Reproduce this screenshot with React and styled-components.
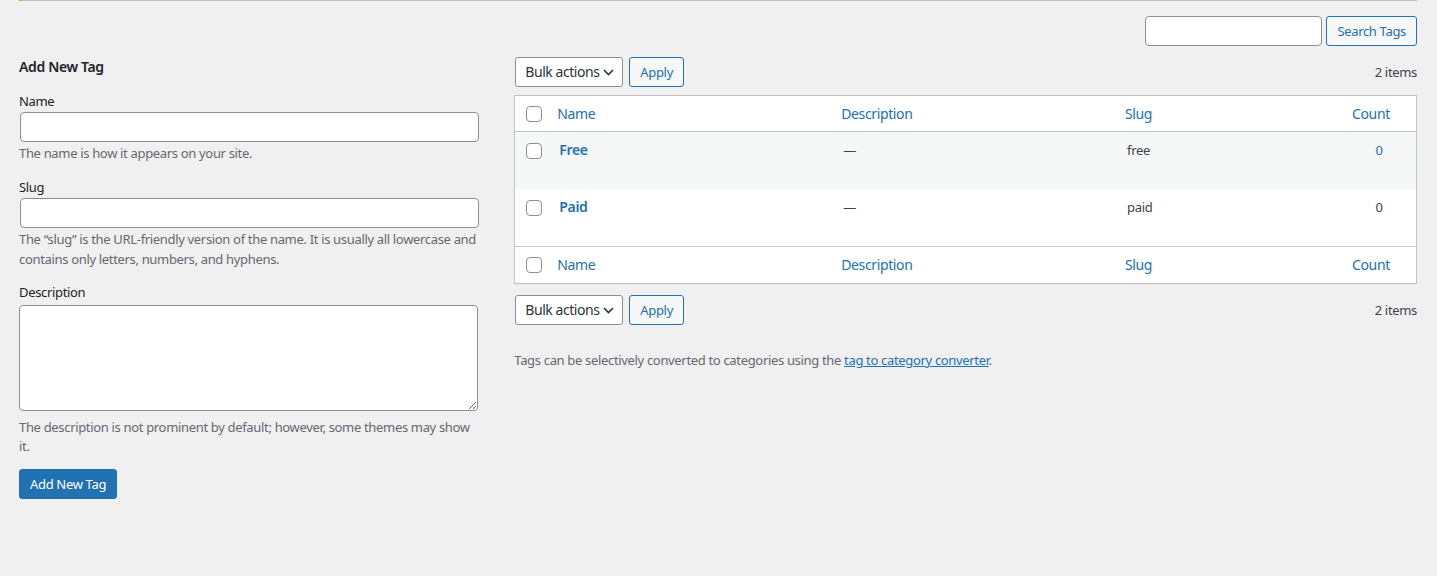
import React from 'react'
import styled, { createGlobalStyle } from 'styled-components'

const FONT = `'Noto Sans', 'Open Sans', sans-serif`
const TIGHT = '-0.33px'
const TIGHT_LG = '-0.36px'

const GlobalStyle = createGlobalStyle`
  * { box-sizing: border-box; }
  html, body {
    margin: 0;
    background: #f0f0f1;
  }
  body {
    font-family: ${FONT};
    font-size: 13px;
    line-height: 1.4em;
    letter-spacing: ${TIGHT};
    color: #3c434a;
  }
`

const Page = styled.div`
  min-height: 576px;
  padding: 0 20px 0 19px;
`

const NoticeEdge = styled.div`
  height: 1px;
  background: #c3c4c7;
  border-left: 3px solid #dba617;
`

const SearchBox = styled.div`
  display: flex;
  justify-content: flex-end;
  gap: 4px;
  margin-top: 15px;
`

const TextInput = styled.input`
  display: block;
  width: ${({ $width }) => $width || '95%'};
  height: 30px;
  margin: ${({ $margin }) => $margin || '1px 1px 0'};
  padding: 0 8px;
  border: 1px solid #8c8f94;
  border-radius: 4px;
  background: #fff;
  font-family: ${FONT};
  font-size: 14px;
  color: #2c3338;
  outline: none;
`

const TextArea = styled.textarea`
  display: block;
  width: 95%;
  height: 106px;
  margin: 2px 0 0;
  padding: 2px 6px;
  border: 1px solid #8c8f94;
  border-radius: 4px;
  background: #fff;
  font-family: ${FONT};
  font-size: 14px;
  outline: none;
`

const Button = styled.button`
  height: 30px;
  padding: 0 10px;
  margin: 0;
  border: 1px solid #2271b1;
  border-radius: 3px;
  background: ${({ $primary }) => ($primary ? '#2271b1' : '#f6f7f7')};
  color: ${({ $primary }) => ($primary ? '#fff' : '#2271b1')};
  font-family: ${FONT};
  font-size: 13px;
  letter-spacing: ${TIGHT};
  line-height: 28px;
  white-space: nowrap;
  cursor: pointer;
`

const Columns = styled.div`
  display: flex;
  align-items: flex-start;
`

const ColLeft = styled.div`
  width: 35%;
  flex: none;
  padding-right: 6px;
`

const ColRight = styled.div`
  flex: 1;
  min-width: 0;
  padding-left: 6px;
`

const FormTitle = styled.h2`
  margin: 11px 0 15px;
  font-size: 14px;
  font-weight: 600;
  line-height: 1.4;
  letter-spacing: ${TIGHT_LG};
  color: #1d2327;
`

const Field = styled.div`
  padding-bottom: ${({ $last }) => ($last ? '7px' : '9px')};
`

const Label = styled.label`
  display: block;
  line-height: 1.5;
  color: #1d2327;
`

const Help = styled.p`
  width: 95%;
  margin: ${({ $top }) => $top || '2px'} 0 5px;
  line-height: 1.5;
  color: #646970;
`

const Submit = styled.p`
  margin: 0;
`

const TableNav = styled.div`
  display: flex;
  align-items: center;
  justify-content: space-between;
  height: 30px;
  margin: ${({ $bottom }) => ($bottom ? '11px 0 0' : '11px 0 8px')};
`

const Actions = styled.div`
  display: flex;
  gap: 6px;
`

const SelectBox = styled.div`
  display: flex;
  align-items: center;
  justify-content: space-between;
  width: 108px;
  height: 30px;
  margin-left: 1px;
  padding: 0 8px 0 9px;
  border: 1px solid #8c8f94;
  border-radius: 3px;
  background: #fff;
  color: #2c3338;
  font-size: 14px;
  letter-spacing: -0.45px;
  line-height: 2;
  white-space: nowrap;
`

const ItemCount = styled.span`
  font-size: 13px;
  color: #3c434a;
`

const Table = styled.table`
  width: 100%;
  table-layout: fixed;
  border-spacing: 0;
  border: 1px solid #c3c4c7;
  background: #fff;
  box-shadow: 0 1px 1px rgba(0, 0, 0, 0.04);
`

const Col = styled.col`
  width: ${({ $w }) => $w || 'auto'};
`

const HeadCell = styled.th`
  padding: ${({ $foot }) => ($foot ? '8px 10px 9px' : '8px 10px')};
  ${({ $foot }) => ($foot ? 'border-top' : 'border-bottom')}: 1px solid #c3c4c7;
  text-align: ${({ $center }) => ($center ? 'center' : 'left')};
  ${({ $center }) => $center && 'padding-right: 32px;'}
  font-weight: 400;
  font-size: 14px;
  letter-spacing: ${TIGHT_LG};
  line-height: 19px;
  color: #2271b1;
  vertical-align: middle;
`

const CheckHead = styled.th`
  padding: 0 0 0 11px;
  ${({ $foot }) => ($foot ? 'border-top' : 'border-bottom')}: 1px solid #c3c4c7;
  vertical-align: middle;
`

const Row = styled.tr`
  height: 57px;
  background: ${({ $alt }) => ($alt ? '#f6f7f7' : '#fff')};
`

const Cell = styled.td`
  padding: 8px 10px 8px 12px;
  vertical-align: top;
  line-height: 20px;
  font-size: 13px;
  text-align: ${({ $center }) => ($center ? 'center' : 'left')};
  ${({ $center }) => $center && 'padding: 8px 10px;'}
  color: ${({ $link }) => ($link ? '#2271b1' : '#3c434a')};
`

const CheckCell = styled.td`
  padding: 11px 0 0 11px;
  vertical-align: top;
`

const Check = styled.span`
  display: block;
  width: 16px;
  height: 16px;
  border: 1px solid #8c8f94;
  border-radius: 4px;
  background: #fff;
`

const RowTitle = styled.a`
  font-size: 14px;
  font-weight: 600;
  letter-spacing: ${TIGHT_LG};
  color: #2271b1;
  text-decoration: none;
`

const Note = styled.p`
  margin: 26px 0 0;
  line-height: 1.5;
  color: #646970;

  a {
    color: #2271b1;
  }
`

const tags = [
  { name: 'Free', slug: 'free', count: 0, linked: true },
  { name: 'Paid', slug: 'paid', count: 0, linked: false }
]

function Chevron () {
  return (
    <svg width='11' height='7' viewBox='0 0 11 7' fill='none'>
      <path d='M1 1l4.5 4.5L10 1' stroke='#2c3338' strokeWidth='1.6' />
    </svg>
  )
}

function Nav ({ bottom }) {
  return (
    <TableNav $bottom={bottom}>
      <Actions>
        <SelectBox>
          Bulk actions
          <Chevron />
        </SelectBox>
        <Button>Apply</Button>
      </Actions>
      <ItemCount>2 items</ItemCount>
    </TableNav>
  )
}

function HeadRow ({ foot }) {
  return (
    <tr>
      <CheckHead $foot={foot}><Check /></CheckHead>
      <HeadCell $foot={foot}>Name</HeadCell>
      <HeadCell $foot={foot}>Description</HeadCell>
      <HeadCell $foot={foot}>Slug</HeadCell>
      <HeadCell $foot={foot} $center>Count</HeadCell>
    </tr>
  )
}

export default function App () {
  return (
    <Page>
      <GlobalStyle />
      <NoticeEdge />
      <SearchBox>
        <TextInput $width='177px' $margin='0' />
        <Button>Search Tags</Button>
      </SearchBox>
      <Columns>
        <ColLeft>
          <FormTitle>Add New Tag</FormTitle>
          <Field>
            <Label>Name</Label>
            <TextInput />
            <Help>The name is how it appears on your site.</Help>
          </Field>
          <Field>
            <Label>Slug</Label>
            <TextInput />
            <Help>The “slug” is the URL-friendly version of the name. It is usually all lowercase and contains only letters, numbers, and hyphens.</Help>
          </Field>
          <Field $last>
            <Label>Description</Label>
            <TextArea />
            <Help $top='7px'>The description is not prominent by default; however, some themes may show it.</Help>
          </Field>
          <Submit>
            <Button $primary>Add New Tag</Button>
          </Submit>
        </ColLeft>
        <ColRight>
          <Nav />
          <Table>
            <colgroup>
              <Col $w='32px' />
              <Col />
              <Col />
              <Col $w='227px' />
              <Col $w='74px' />
            </colgroup>
            <thead>
              <HeadRow />
            </thead>
            <tbody>
              {tags.map((t, i) => (
                <Row key={t.slug} $alt={i % 2 === 0}>
                  <CheckCell><Check /></CheckCell>
                  <Cell><RowTitle href='#'>{t.name}</RowTitle></Cell>
                  <Cell>—</Cell>
                  <Cell>{t.slug}</Cell>
                  <Cell $center $link={t.linked}>{t.count}</Cell>
                </Row>
              ))}
            </tbody>
            <tfoot>
              <HeadRow foot />
            </tfoot>
          </Table>
          <Nav bottom />
          <Note>
            Tags can be selectively converted to categories using the <a href='#'>tag to category converter</a>.
          </Note>
        </ColRight>
      </Columns>
    </Page>
  )
}
